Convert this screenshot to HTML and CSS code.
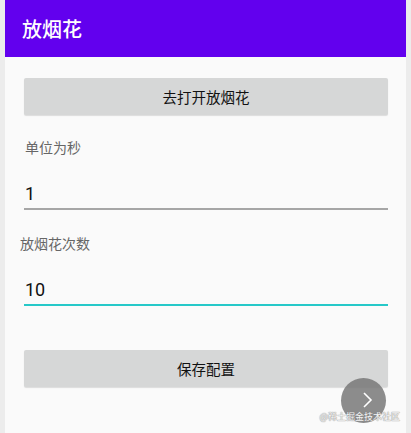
FILE: index.html
```html
<!DOCTYPE html>
<html lang="zh-CN">
<head>
  <meta charset="UTF-8">
  <title>放烟花</title>
  <meta name="viewport" content="width=device-width, initial-scale=1.0" />
  <link rel="stylesheet" href="styles.css">
</head>
<body>
  <div class="screen">
    <div class="appbar">放烟花</div>

    <div class="content">
      <button class="btn">去打开放烟花</button>

      <div class="label">单位为秒</div>
      <div class="field">1</div>

      <div class="label label-shift">放烟花次数</div>
      <div class="field field-focus">10</div>

      <button class="btn btn-save">保存配置</button>
    </div>

    <div class="fab">
      <svg width="45" height="45" viewBox="0 0 45 45">
        <polyline points="23,15 30,22 23,29" fill="none" stroke="#fff" stroke-width="1.6" />
      </svg>
    </div>
    <div class="watermark">@稀土掘金技术社区</div>
  </div>
</body>
</html>
```

FILE: styles.css
```css
body {
  margin: 0;
  background: #ececec;
  font-family: "Noto Sans CJK SC", "Noto Sans", sans-serif;
  color: #222;
}

.screen {
  position: relative;
  margin: 0 5px;
  height: 433px;
  background: #fafafa;
  overflow: hidden;
}

.appbar {
  height: 57px;
  line-height: 57px;
  padding-left: 17px;
  background: #6200ee;
  color: #fff;
  font-size: 20px;
  font-weight: 500;
}

.content {
  padding: 21px 18px 0 19px;
}

.btn {
  display: block;
  width: 100%;
  height: 37px;
  margin: 0;
  padding: 0;
  border: none;
  border-radius: 2px;
  background: #d6d7d7;
  box-shadow: 0 1px 1px rgba(0, 0, 0, 0.12);
  font-family: inherit;
  font-size: 14.5px;
  color: #111;
}

.label {
  margin-top: 22px;
  padding-left: 1px;
  font-size: 14px;
  line-height: 20px;
  color: #666;
}

.label-shift {
  margin-left: -5px;
  margin-top: 23px;
}

.field {
  margin-top: 25px;
  padding-left: 1px;
  padding-bottom: 2px;
  border-bottom: 2px solid #a6a6a6;
  font-family: Roboto, "Noto Sans CJK SC", sans-serif;
  font-size: 18px;
  line-height: 24px;
  color: #111;
}

.field-focus {
  border-bottom-color: #26c8c8;
}

.btn-save {
  margin-top: 44px;
}

.fab {
  position: absolute;
  left: 336px;
  top: 378px;
  width: 45px;
  height: 45px;
  border-radius: 50%;
  background: rgba(120, 120, 120, 0.85);
}

.watermark {
  position: absolute;
  right: 6px;
  top: 410px;
  font-size: 9px;
  line-height: 14px;
  color: #f4f4f4;
  text-shadow: 0 0 1px #888, 0 0 1px #888;
}
```
